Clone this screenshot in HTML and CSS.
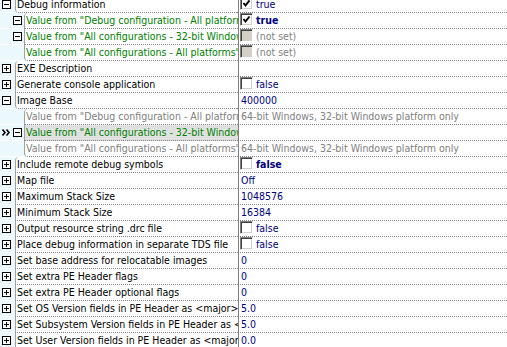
FILE: index.html
```html
<!DOCTYPE html>
<html>
<head>
<meta charset="utf-8">
<link rel="stylesheet" href="styles.css">
</head>
<body>
<div class="grid">
  <div class="row">
    <div class="gut"><span class="box minus"></span></div>
    <div class="name open">Debug information</div>
    <div class="val"><span class="chk"><svg viewBox="0 0 9 9" width="9" height="9"><path d="M1.5 4 L3.5 6.5 L7.5 1.5" /></svg></span><span>true</span></div>
  </div>
  <div class="row child">
    <div class="gut"><span class="box minus sub"></span></div>
    <div class="name first act">Value from "Debug configuration - All platforms"</div>
    <div class="val"><span class="chk"><svg viewBox="0 0 9 9" width="9" height="9"><path d="M1.5 4 L3.5 6.5 L7.5 1.5" /></svg></span><b>true</b></div>
  </div>
  <div class="row child">
    <div class="gut"><span class="box minus sub"></span></div>
    <div class="name act">Value from "All configurations - 32-bit Windows platform"</div>
    <div class="val dim"><span class="chk off"></span><span>(not set)</span></div>
  </div>
  <div class="row child">
    <div class="gut"></div>
    <div class="name last act">Value from "All configurations - All platforms"</div>
    <div class="val dim"><span class="chk off"></span><span>(not set)</span></div>
  </div>
  <div class="row">
    <div class="gut"><span class="box plus"></span></div>
    <div class="name after">EXE Description</div>
    <div class="val"></div>
  </div>
  <div class="row">
    <div class="gut"><span class="box plus"></span></div>
    <div class="name">Generate console application</div>
    <div class="val"><span class="chk"></span><span>false</span></div>
  </div>
  <div class="row">
    <div class="gut"><span class="box minus"></span></div>
    <div class="name open">Image Base</div>
    <div class="val"><span>400000</span></div>
  </div>
  <div class="row child">
    <div class="gut"></div>
    <div class="name first inact">Value from "Debug configuration - All platforms"</div>
    <div class="val dim"><span>64-bit Windows, 32-bit Windows platform only</span></div>
  </div>
  <div class="row child">
    <div class="gut"><svg class="arrow" viewBox="0 0 8 7" width="8" height="7"><path d="M0.5 0.5 L3 3.5 L0.5 6.5 M4.5 0.5 L7 3.5 L4.5 6.5" /></svg><span class="box minus"></span></div>
    <div class="name act sel">Value from "All configurations - 32-bit Windows platform"</div>
    <div class="val"></div>
  </div>
  <div class="row child">
    <div class="gut"></div>
    <div class="name last inact">Value from "All configurations - All platforms"</div>
    <div class="val dim"><span>64-bit Windows, 32-bit Windows platform only</span></div>
  </div>
  <div class="row">
    <div class="gut"><span class="box plus"></span></div>
    <div class="name after">Include remote debug symbols</div>
    <div class="val"><span class="chk"></span><b>false</b></div>
  </div>
  <div class="row">
    <div class="gut"><span class="box plus"></span></div>
    <div class="name">Map file</div>
    <div class="val"><span>Off</span></div>
  </div>
  <div class="row">
    <div class="gut"><span class="box plus"></span></div>
    <div class="name">Maximum Stack Size</div>
    <div class="val"><span>1048576</span></div>
  </div>
  <div class="row">
    <div class="gut"><span class="box plus"></span></div>
    <div class="name">Minimum Stack Size</div>
    <div class="val"><span>16384</span></div>
  </div>
  <div class="row">
    <div class="gut"><span class="box plus"></span></div>
    <div class="name">Output resource string .drc file</div>
    <div class="val"><span class="chk"></span><span>false</span></div>
  </div>
  <div class="row">
    <div class="gut"><span class="box plus"></span></div>
    <div class="name">Place debug information in separate TDS file</div>
    <div class="val"><span class="chk"></span><span>false</span></div>
  </div>
  <div class="row">
    <div class="gut"><span class="box plus"></span></div>
    <div class="name">Set base address for relocatable images</div>
    <div class="val"><span>0</span></div>
  </div>
  <div class="row">
    <div class="gut"><span class="box plus"></span></div>
    <div class="name">Set extra PE Header flags</div>
    <div class="val"><span>0</span></div>
  </div>
  <div class="row">
    <div class="gut"><span class="box plus"></span></div>
    <div class="name">Set extra PE Header optional flags</div>
    <div class="val"><span>0</span></div>
  </div>
  <div class="row">
    <div class="gut"><span class="box plus"></span></div>
    <div class="name">Set OS Version fields in PE Header as &lt;major&gt;.&lt;minor&gt;</div>
    <div class="val"><span>5.0</span></div>
  </div>
  <div class="row">
    <div class="gut"><span class="box plus"></span></div>
    <div class="name">Set Subsystem Version fields in PE Header as &lt;major&gt;.&lt;minor&gt;</div>
    <div class="val"><span>5.0</span></div>
  </div>
  <div class="row">
    <div class="gut"><span class="box plus"></span></div>
    <div class="name">Set User Version fields in PE Header as &lt;major&gt;.&lt;minor&gt;</div>
    <div class="val"><span>0.0</span></div>
  </div>
</div>
</body>
</html>
```

FILE: styles.css
```css
html, body {
  margin: 0;
  padding: 0;
  background: #ffffff;
  overflow: hidden;
}
body {
  font-family: "DejaVu Sans Condensed", "DejaVu Sans", sans-serif;
  font-stretch: condensed;
  font-size: 10.5px;
  color: #000000;
}
.grid {
  width: 507px;
  margin-top: -3px;
  display: flex;
  flex-direction: column;
}
.row {
  display: flex;
  height: 16px;
  flex: none;
}
.gut {
  width: 15px;
  flex: none;
  background: #ebf8fc;
  display: flex;
  align-items: center;
  height: 15px;
}
.row.child .gut {
  width: 24px;
}
.box {
  box-sizing: border-box;
  width: 9px;
  height: 9px;
  margin-left: 2px;
  border: 1px solid #000000;
  position: relative;
  background: #ffffff;
  flex: none;
}
.box.sub {
  margin-left: 13px;
}
.box::before {
  content: "";
  position: absolute;
  left: 1px;
  top: 3px;
  width: 5px;
  height: 1px;
  background: #000000;
}
.box.plus::after {
  content: "";
  position: absolute;
  left: 3px;
  top: 1px;
  width: 1px;
  height: 5px;
  background: #000000;
}
.arrow {
  margin-left: 2px;
  flex: none;
}
.arrow path {
  fill: none;
  stroke: #000000;
  stroke-width: 1.6;
}
.arrow + .box {
  margin-left: 3px;
}
.name {
  box-sizing: border-box;
  width: 223px;
  flex: none;
  height: 16px;
  border-left: 1px solid #a0a0a0;
  border-bottom: 1px dotted #808080;
  padding-left: 1px;
  line-height: 15px;
  white-space: nowrap;
  overflow: hidden;
  background: #ffffff;
}
.row.child .name {
  width: 214px;
}
.name.open {
  border-bottom-left-radius: 4px;
}
.name.first {
  border-top-left-radius: 4px;
}
.name.last {
  border-bottom-left-radius: 4px;
}
.name.after {
  border-top-left-radius: 4px;
}
.name.act {
  color: #008000;
}
.name.inact {
  color: #808080;
}
.name.sel {
  background: #e0e0e0;
}
.val {
  box-sizing: border-box;
  flex: 1;
  height: 16px;
  border-left: 1px solid #808080;
  border-bottom: 1px dotted #808080;
  padding-left: 1px;
  color: #000080;
  line-height: 15px;
  display: flex;
  align-items: flex-start;
  white-space: nowrap;
}
.val > span:not(.chk), .val > b {
  padding-left: 1px;
}
.val b {
  font-weight: 700;
}
.val.dim {
  color: #808080;
}
.chk {
  box-sizing: border-box;
  width: 13px;
  height: 13px;
  flex: none;
  margin-right: 2px;
  border: 1px solid;
  border-color: #808080 #ffffff #ffffff #808080;
  box-shadow: inset 1px 1px 0 #404040, inset -1px -1px 0 #d4d0c8;
  background: #ffffff;
  display: flex;
  align-items: center;
  justify-content: center;
}
.chk.off {
  background: #d4d0c8;
}
.chk svg path {
  fill: none;
  stroke: #000000;
  stroke-width: 2;
}
```
